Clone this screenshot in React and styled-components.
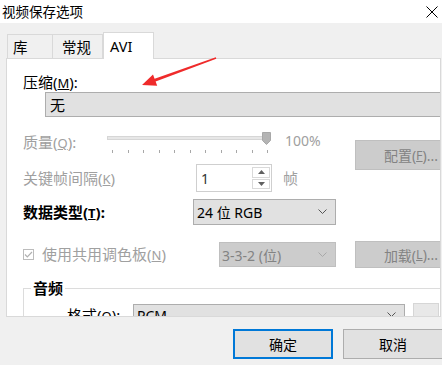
import React from "react";
import styled, { createGlobalStyle } from "styled-components";

const GlobalStyle = createGlobalStyle`
  html, body {
    margin: 0;
    padding: 0;
    background: #f0f0f0;
  }
  body {
    font-family: "Noto Sans", "Noto Sans CJK SC", sans-serif;
  }
  * {
    box-sizing: border-box;
  }
`;

const Window = styled.div`
  position: relative;
  width: 442px;
  height: 365px;
  overflow: hidden;
  background: #f0f0f0;
  display: flex;
  flex-direction: column;
  color: #000;
`;

const TitleBar = styled.div`
  height: 23px;
  flex-shrink: 0;
  background: #fff;
  display: flex;
  align-items: center;
  justify-content: space-between;
  padding: 0 4px 0 2px;
  font-size: 13.5px;
  line-height: 16px;
`;

const TabStrip = styled.div`
  height: 35px;
  flex-shrink: 0;
  display: flex;
  align-items: flex-end;
  padding-left: 7px;
  position: relative;
  z-index: 1;
`;

const Tab = styled.div`
  width: ${({ w }) => w}px;
  height: ${({ active }) => (active ? "27px" : "24px")};
  margin-bottom: ${({ active }) => (active ? "-1px" : "0")};
  padding-left: ${({ pl }) => pl}px;
  background: ${({ active }) => (active ? "#fff" : "#f0f0f0")};
  border: 1px solid #d9d9d9;
  border-bottom: none;
  border-left-width: ${({ first, active }) => (first || active ? "1px" : "0")};
  display: flex;
  align-items: center;
  font-size: 14.5px;
  line-height: 18px;
`;

const Panel = styled.div`
  margin-left: 6px;
  width: 435px;
  height: 259px;
  flex-shrink: 0;
  background: #fff;
  border: 1px solid #d9d9d9;
  padding: 14px 0 0 16px;
  overflow: hidden;
  display: flex;
  flex-direction: column;
`;

const Label = styled.div`
  width: ${({ w }) => (w ? `${w}px` : "auto")};
  margin-left: ${({ ml }) => ml || 0}px;
  flex-shrink: 0;
  font-size: 15px;
  line-height: ${({ lh }) => lh || 18}px;
  font-weight: ${({ bold }) => (bold ? 700 : 400)};
  color: ${({ disabled }) => (disabled ? "#a0a0a0" : "#000")};
  white-space: nowrap;
  u {
    font-size: 13px;
  }
`;

const Combo = styled.div`
  margin-left: ${({ ml }) => ml || 0}px;
  width: ${({ w }) => w}px;
  height: ${({ h }) => h}px;
  flex-shrink: 0;
  background: ${({ disabled }) => (disabled ? "#cccccc" : "#e1e1e1")};
  border: 1px solid ${({ disabled }) => (disabled ? "#bfbfbf" : "#adadad")};
  color: ${({ disabled }) => (disabled ? "#838383" : "#000")};
  display: flex;
  align-items: center;
  justify-content: space-between;
  padding: 0 8px 0 ${({ pl }) => pl || 3}px;
  font-size: ${({ fs }) => fs || 14}px;
  white-space: nowrap;
`;

const Section = styled.div`
  display: flex;
  align-items: flex-start;
  margin-top: ${({ mt }) => mt}px;
`;

const Column = styled.div`
  width: ${({ w }) => w}px;
  flex-shrink: 0;
  display: flex;
  flex-direction: column;
`;

const Row = styled.div`
  display: flex;
  align-items: ${({ top }) => (top ? "flex-start" : "center")};
  height: ${({ h }) => h}px;
  margin-top: ${({ mt }) => mt || 0}px;
  flex-shrink: 0;
`;

const SliderBox = styled.div`
  position: relative;
  width: 165px;
  height: 32px;
  flex-shrink: 0;
  display: flex;
  flex-direction: column;
`;

const Track = styled.div`
  margin-top: 4px;
  width: 160px;
  height: 4px;
  background: #e7e7e7;
  border: 1px solid #d6d6d6;
`;

const Thumb = styled.svg`
  position: absolute;
  left: 155px;
  top: 0;
`;

const Ticks = styled.div`
  margin: 10px 0 0 5px;
  width: 156px;
  display: flex;
  justify-content: space-between;
  span {
    width: 1px;
    height: 3px;
    background: #a8a8a8;
  }
`;

const Percent = styled.div`
  margin-left: 13px;
  font-size: 14px;
  line-height: 18px;
  color: #a0a0a0;
`;

const Button = styled.div`
  margin-left: ${({ ml }) => ml || 0}px;
  margin-top: ${({ mt }) => mt || 0}px;
  width: ${({ w }) => w}px;
  height: ${({ h }) => h}px;
  flex-shrink: 0;
  background: ${({ disabled }) => (disabled ? "#cccccc" : "#e1e1e1")};
  border: ${({ primary, disabled }) =>
    primary ? "2px solid #0078d7" : disabled ? "1px solid #bfbfbf" : "1px solid #adadad"};
  color: ${({ disabled }) => (disabled ? "#838383" : "#000")};
  display: flex;
  align-items: center;
  justify-content: center;
  font-size: 14px;
  white-space: nowrap;
  u {
    font-size: 12.5px;
  }
`;

const SpinBox = styled.div`
  width: 76px;
  height: 28px;
  flex-shrink: 0;
  border: 1px solid #cfcfcf;
  display: flex;
  align-items: stretch;
  font-size: 14px;
  color: #333;
`;

const SpinValue = styled.div`
  flex: 1;
  display: flex;
  align-items: center;
  padding-left: 4px;
`;

const SpinButtons = styled.div`
  width: 19px;
  display: flex;
  flex-direction: column;
  justify-content: center;
  gap: 1px;
  padding: 2px 1px 2px 0;
`;

const SpinButton = styled.div`
  flex: 1;
  border: 1px solid #d9d9d9;
  display: flex;
  align-items: center;
  justify-content: center;
`;

const CheckBox = styled.svg`
  flex-shrink: 0;
  margin-right: 8px;
`;

const Group = styled.fieldset`
  margin: ${({ mt }) => mt}px 0 0 0;
  padding: 7px 0 0 0;
  width: 460px;
  border: 1px solid #dcdcdc;
  min-width: 0;
`;

const Legend = styled.legend`
  margin-left: 7px;
  padding: 0 2px;
  font-size: 15px;
  line-height: 18px;
  font-weight: 700;
`;

const GroupBody = styled.div`
  padding-left: 43px;
`;

const IconBox = styled.div`
  margin-left: 8px;
  margin-top: -1px;
  width: 26px;
  height: 24px;
  flex-shrink: 0;
  background: #e8e8e8;
  border: 1px solid #d6d6d6;
  display: flex;
  align-items: flex-end;
  justify-content: center;
  padding-bottom: 2px;
`;

const Footer = styled.div`
  display: flex;
  gap: 10px;
  padding: 12px 0 0 233px;
`;

const Overlay = styled.svg`
  position: absolute;
  left: 0;
  top: 0;
  pointer-events: none;
  z-index: 5;
`;

const Chevron = ({ color = "#555" }) => (
  <svg width="9" height="6" viewBox="0 0 9 6">
    <path d="M0.5 0.5 L4.5 4.5 L8.5 0.5" fill="none" stroke={color} strokeWidth="1" />
  </svg>
);

export default function App() {
  const ticks = Array.from({ length: 11 });
  return (
    <Window>
      <GlobalStyle />
      <TitleBar>
        <span>视频保存选项</span>
        <svg width="12" height="12" viewBox="0 0 12 12">
          <path d="M0.5 0.5 L11.5 11.5 M11.5 0.5 L0.5 11.5" stroke="#000" strokeWidth="1" />
        </svg>
      </TitleBar>

      <TabStrip>
        <Tab w={46} pl={5} first>库</Tab>
        <Tab w={50} pl={9}>常规</Tab>
        <Tab w={51} pl={6} active>AVI</Tab>
      </TabStrip>

      <Panel>
        <Label>
          压缩(<u>M</u>):
        </Label>
        <Combo ml={22} w={420} h={25} pl={4} fs={15}>
          无
        </Combo>

        <Section mt={15}>
          <Column w={332}>
            <Row h={32} top>
              <Label w={84} lh={20} disabled>
                质量(<u>Q</u>):
              </Label>
              <SliderBox>
                <Track />
                <Thumb width="9" height="13" viewBox="0 0 9 13">
                  <path d="M0.5 0.5 H8.5 V8.5 L4.5 12.5 L0.5 8.5 Z" fill="#b4b4b4" stroke="#a8a8a8" />
                </Thumb>
                <Ticks>
                  {ticks.map((_, i) => (
                    <span key={i} />
                  ))}
                </Ticks>
              </SliderBox>
              <Percent>100%</Percent>
            </Row>
            <Row h={28}>
              <Label w={173} disabled>
                关键帧间隔(<u>K</u>)
              </Label>
              <SpinBox>
                <SpinValue>1</SpinValue>
                <SpinButtons>
                  <SpinButton>
                    <svg width="7" height="4" viewBox="0 0 7 4">
                      <path d="M0 4 L3.5 0 L7 4 Z" fill="#606060" />
                    </svg>
                  </SpinButton>
                  <SpinButton>
                    <svg width="7" height="4" viewBox="0 0 7 4">
                      <path d="M0 0 L3.5 4 L7 0 Z" fill="#606060" />
                    </svg>
                  </SpinButton>
                </SpinButtons>
              </SpinBox>
              <Label ml={11} disabled>
                帧
              </Label>
            </Row>
          </Column>
          <Button disabled mt={8} w={112} h={30}>
            配置(<u>F</u>)...
          </Button>
        </Section>

        <Row h={26} mt={7}>
          <Label w={170} bold>
            数据类型(<u>T</u>):
          </Label>
          <Combo w={143} h={26}>
            <span>24 位 RGB</span>
            <Chevron />
          </Combo>
        </Row>

        <Row h={27} mt={16}>
          <CheckBox width="11" height="11" viewBox="0 0 11 11">
            <rect x="0.5" y="0.5" width="10" height="10" fill="#fff" stroke="#bcbcbc" />
            <path d="M2 5.5 L4.3 7.8 L9 3" fill="none" stroke="#b0b0b0" strokeWidth="1.2" />
          </CheckBox>
          <Label w={177} disabled>
            使用共用调色板(<u>N</u>)
          </Label>
          <Combo disabled w={117} h={25} pl={2}>
            <span>3-3-2 (位)</span>
            <Chevron color="#a8a8a8" />
          </Combo>
          <Button disabled ml={19} w={112} h={27}>
            加载(<u>L</u>)...
          </Button>
        </Row>

        <Group mt={11}>
          <Legend>音频</Legend>
          <GroupBody>
            <Row h={24} top>
              <Label w={66} lh={22}>
                格式(<u>O</u>):
              </Label>
              <Combo w={272} h={22}>
                <span>PCM</span>
                <Chevron />
              </Combo>
              <IconBox>
                <svg width="20" height="9" viewBox="0 0 20 9">
                  <rect x="0" y="5" width="3" height="3" fill="#000" />
                  <path d="M4 8 L10 8 L10 1 Z" fill="#000" />
                  <path d="M13 7 L17 2" stroke="#000" strokeWidth="1.2" />
                </svg>
              </IconBox>
            </Row>
          </GroupBody>
        </Group>
      </Panel>

      <Footer>
        <Button primary w={100} h={30}>
          确定
        </Button>
        <Button w={100} h={30}>
          取消
        </Button>
      </Footer>

      <Overlay width="442" height="365" viewBox="0 0 442 365">
        <polygon
          points="215.8,57.3 154.6,78.8 153,74.6 142,85 157.2,85.8 155.6,81.6 216.3,58.7"
          fill="#ef2b2b"
        />
      </Overlay>
    </Window>
  );
}
